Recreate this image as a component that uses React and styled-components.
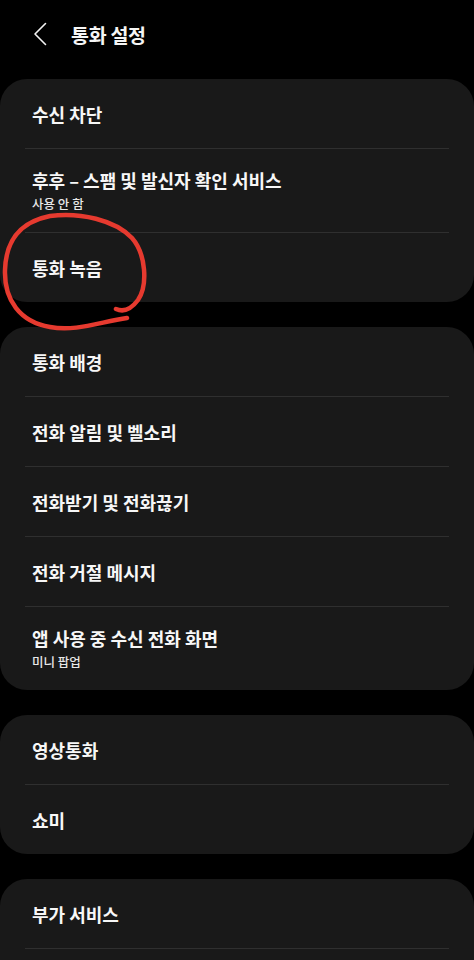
import styled, { createGlobalStyle } from 'styled-components';

const GlobalStyle = createGlobalStyle`
  html, body {
    margin: 0;
    padding: 0;
    background: #000;
    overflow: hidden;
  }
  body {
    font-family: "Noto Sans CJK KR", "Noto Sans", sans-serif;
    color: #fafafa;
  }
`

const Screen = styled.div`
  position: relative;
  width: 474px;
  height: 960px;
  overflow: hidden;
  background: #000;
`

const Header = styled.header`
  display: flex;
  align-items: center;
  height: 79px;
  padding: 0 0 11px 28px;
  box-sizing: border-box;
  gap: 19px;
`

const BackButton = styled.button`
  display: flex;
  align-items: center;
  justify-content: center;
  width: 24px;
  height: 30px;
  padding: 0;
  border: none;
  background: transparent;
  color: #f2f2f2;
`

const Title = styled.h1`
  margin: 0;
  font-size: 19.5px;
  font-weight: 700;
  letter-spacing: -0.3px;
  color: #f5f5f5;
`

const List = styled.div`
  display: flex;
  flex-direction: column;
  gap: 25px;
`

const Card = styled.section`
  background: #191919;
  border-radius: 27px;
  overflow: hidden;
`

const Row = styled.div`
  display: flex;
  flex-direction: column;
  justify-content: center;
  min-height: ${p => (p.$sub ? 83 : 69)}px;
  padding: 0 32px;
  & + & {
    border-top: 1px solid #2f2f2f;
    margin: 0 25px;
    padding: 0 7px;
  }
`

const Label = styled.div`
  font-size: 18px;
  font-weight: 600;
  line-height: 22px;
  color: #f7f7f7;
`

const Sub = styled.div`
  font-size: 12.5px;
  font-weight: 500;
  line-height: 16px;
  margin-top: 5px;
  color: #e8e8e8;
`

const Scribble = styled.svg`
  position: absolute;
  left: 0;
  top: 0;
  pointer-events: none;
`

// the last row of the final card sits below the fold, so it has no label
const groups = [
  [
    { label: '수신 차단' },
    { label: '후후 – 스팸 및 발신자 확인 서비스', sub: '사용 안 함' },
    { label: '통화 녹음' },
  ],
  [
    { label: '통화 배경' },
    { label: '전화 알림 및 벨소리' },
    { label: '전화받기 및 전화끊기' },
    { label: '전화 거절 메시지' },
    { label: '앱 사용 중 수신 전화 화면', sub: '미니 팝업' },
  ],
  [
    { label: '영상통화' },
    { label: '쇼미' },
  ],
  [
    { label: '부가 서비스' },
    { label: '' },
  ],
]

const App = () => {
  return (
    <Screen>
      <GlobalStyle />
      <Header>
        <BackButton aria-label="뒤로">
          <svg width="14" height="24" viewBox="0 0 14 24" fill="none">
            <path d="M12.5 1.5L2 12l10.5 10.5" stroke="currentColor" strokeWidth="1.6" strokeLinecap="round" strokeLinejoin="round" />
          </svg>
        </BackButton>
        <Title>통화 설정</Title>
      </Header>
      <List>
        {groups.map((items, i) => (
          <Card key={i}>
            {items.map((item, j) => (
              <Row key={j} $sub={!!item.sub}>
                {item.label && <Label>{item.label}</Label>}
                {item.sub && <Sub>{item.sub}</Sub>}
              </Row>
            ))}
          </Card>
        ))}
      </List>
      <Scribble width="160" height="340" viewBox="0 0 160 340">
        <path
          d="M127 318 C100 322, 75 332, 50 327 C20 322, 4 300, 5 270 C6 240, 20 222, 50 216 C80 212, 115 220, 132 238 C146 254, 148 285, 138 300 C132 308, 125 313, 116 309"
          stroke="#e63a2f"
          strokeWidth="4.5"
          fill="none"
          strokeLinecap="round"
          strokeLinejoin="round"
        />
      </Scribble>
    </Screen>
  )
}

export default App;
